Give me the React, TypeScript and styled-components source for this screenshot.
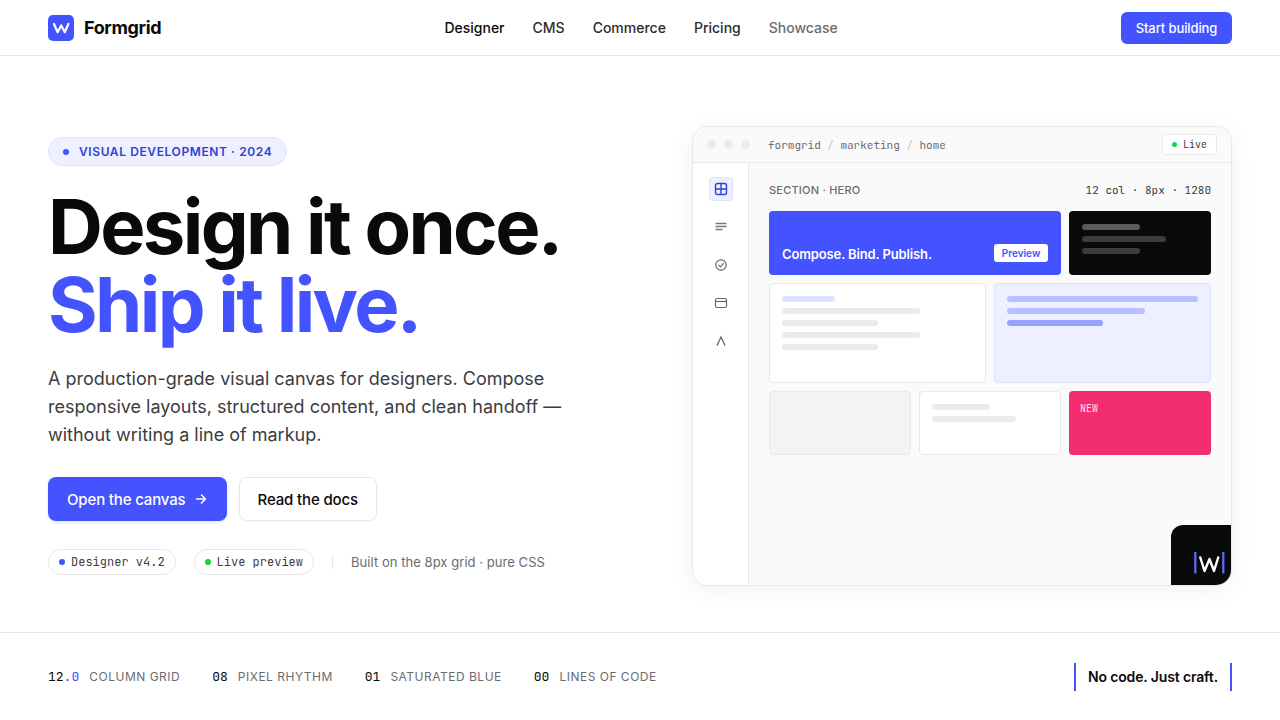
import styled, { createGlobalStyle } from 'styled-components'

const MONO = `"JetBrains Mono", "DejaVu Sans Mono", "Liberation Mono", monospace`

const GlobalStyle = createGlobalStyle`
  html, body {
    margin: 0;
    background: #fff;
    font-family: Inter, "Liberation Sans", sans-serif;
    color: #0a0a0a;
  }
  * { box-sizing: border-box; }
`

const App = () => {
  return (
    <>
      <GlobalStyle />
      <Page>
        <Header>
          <Brand>
            <LogoMark viewBox="0 0 26 26">
              <rect width="26" height="26" rx="5" fill="#4353ff" />
              <path d="M6 9 L9.600 17.200 L13.200 10.500 L16.800 17.200 L20.400 9" fill="none" stroke="#fff" strokeWidth="2.2" strokeLinejoin="round" strokeLinecap="round" />
            </LogoMark>
            <BrandName>Formgrid</BrandName>
          </Brand>
          <Nav>
            <NavLink $active>Designer</NavLink>
            <NavLink>CMS</NavLink>
            <NavLink>Commerce</NavLink>
            <NavLink>Pricing</NavLink>
            <NavLink $muted>Showcase</NavLink>
          </Nav>
          <StartButton>Start building</StartButton>
        </Header>

        <Hero>
          <HeroCopy>
            <Eyebrow>
              <Dot $color="#4353ff" $size={6} />
              VISUAL DEVELOPMENT · 2024
            </Eyebrow>
            <Headline>
              Design it once.
              <br />
              <Accent>Ship it live.</Accent>
            </Headline>
            <Lead>
              A production-grade visual canvas for designers. Compose responsive layouts, structured content, and clean handoff — without writing a line of markup.
            </Lead>
            <Actions>
              <PrimaryButton>
                Open the canvas
                <svg width="14" height="14" viewBox="0 0 14 14" fill="none" stroke="#fff" strokeWidth="1.5" strokeLinecap="round" strokeLinejoin="round">
                  <path d="M2.5 7h9M7.5 3l4 4-4 4" />
                </svg>
              </PrimaryButton>
              <GhostButton>Read the docs</GhostButton>
            </Actions>
            <MetaRow>
              <Tag>
                <Dot $color="#4353ff" $size={6} />
                Designer v4.2
              </Tag>
              <Tag>
                <Dot $color="#19d13a" $size={6} />
                Live preview
              </Tag>
              <MetaDivider />
              <MetaNote>Built on the 8px grid · pure CSS</MetaNote>
            </MetaRow>
          </HeroCopy>

          <Canvas>
            <TitleBar>
              <Lights>
                <Light />
                <Light />
                <Light />
              </Lights>
              <Crumbs>
                formgrid<CrumbSep>/</CrumbSep>marketing<CrumbSep>/</CrumbSep>home
              </Crumbs>
              <LivePill>
                <Dot $color="#19d13a" $size={5} />
                Live
              </LivePill>
            </TitleBar>
            <CanvasBody>
              <Sidebar>
                <SideIcon $active>
                  <svg width="14" height="14" viewBox="0 0 14 14" fill="none" stroke="#3140d8" strokeWidth="1.4">
                    <rect x="1.5" y="1.5" width="11" height="11" rx="2" />
                    <path d="M7 1.5v11M1.5 7h11" />
                  </svg>
                </SideIcon>
                <SideIcon>
                  <svg width="14" height="14" viewBox="0 0 14 14" fill="none" stroke="#77777c" strokeWidth="1.3">
                    <path d="M1.5 3.500h11M1.500 6.500h11M1.500 9.500h7" />
                  </svg>
                </SideIcon>
                <SideIcon>
                  <svg width="14" height="14" viewBox="0 0 14 14" fill="none" stroke="#66666b" strokeWidth="1.2" strokeLinecap="round" strokeLinejoin="round">
                    <circle cx="7" cy="7" r="5.2" />
                    <path d="M4.8 7.2l1.6 1.6 3-3.2" />
                  </svg>
                </SideIcon>
                <SideIcon>
                  <svg width="14" height="14" viewBox="0 0 14 14" fill="none" stroke="#66666b" strokeWidth="1.2">
                    <rect x="1.5" y="2.5" width="11" height="9" rx="1.5" />
                    <path d="M1.5 5.5h11" />
                  </svg>
                </SideIcon>
                <SideIcon>
                  <svg width="14" height="14" viewBox="0 0 14 14" fill="none" stroke="#66666b" strokeWidth="1.3">
                    <path d="M3 11.5L7 3l4 8.5" />
                  </svg>
                </SideIcon>
              </Sidebar>
              <Stage>
                <StageHead>
                  <StageLabel>SECTION · HERO</StageLabel>
                  <StageSpec>12 col · 8px · 1280</StageSpec>
                </StageHead>
                <BlockGrid>
                  <BlueBlock>
                    <BlueTitle>Compose. Bind. Publish.</BlueTitle>
                    <PreviewChip>Preview</PreviewChip>
                  </BlueBlock>
                  <DarkBlock>
                    <Bar $w={58} $bg="#5a5a5a" $h={6} />
                    <Bar $w={84} $bg="#3c3c3c" $h={6} />
                    <Bar $w={58} $bg="#3c3c3c" $h={6} />
                  </DarkBlock>
                  <WhiteBlock $span={3}>
                    <Bar $w={53} $bg="#dfe2ff" $h={6} />
                    <Bar $w={138} $bg="#ebebec" $h={6} />
                    <Bar $w={96} $bg="#ebebec" $h={6} />
                    <Bar $w={138} $bg="#ebebec" $h={6} />
                    <Bar $w={96} $bg="#ebebec" $h={6} />
                  </WhiteBlock>
                  <TintBlock>
                    <Bar $w={191} $bg="#b9c0ff" $h={6} />
                    <Bar $w={138} $bg="#b9c0ff" $h={6} />
                    <Bar $w={96} $bg="#96a0ff" $h={6} />
                  </TintBlock>
                  <GreyBlock />
                  <WhiteBlock $span={2}>
                    <Bar $w={58} $bg="#ebebec" $h={6} />
                    <Bar $w={84} $bg="#ebebec" $h={6} />
                  </WhiteBlock>
                  <PinkBlock>NEW</PinkBlock>
                </BlockGrid>
              </Stage>
            </CanvasBody>
            <CornerBadge>
              <svg width="32" height="22" viewBox="0 0 32 22" fill="none">
                <path d="M2.300 0v21.500M30.300 0v21.500" stroke="#5c6cff" strokeWidth="2.2" />
                <path d="M7 4.500L11.500 19L16.500 7L21 19L25.500 4.500" stroke="#fff" strokeWidth="2.4" strokeLinejoin="round" />
              </svg>
            </CornerBadge>
          </Canvas>
        </Hero>

        <Footer>
          <Stats>
            <Stat>
              <StatNum>12<StatDec>.0</StatDec></StatNum>
              <StatLabel>COLUMN GRID</StatLabel>
            </Stat>
            <Stat>
              <StatNum>08</StatNum>
              <StatLabel>PIXEL RHYTHM</StatLabel>
            </Stat>
            <Stat>
              <StatNum>01</StatNum>
              <StatLabel>SATURATED BLUE</StatLabel>
            </Stat>
            <Stat>
              <StatNum>00</StatNum>
              <StatLabel>LINES OF CODE</StatLabel>
            </Stat>
          </Stats>
          <Tagline>No code. Just craft.</Tagline>
        </Footer>
      </Page>
    </>
  )
}

export default App

const Page = styled.div`
  width: 1280px;
  height: 720px;
  display: flex;
  flex-direction: column;
  overflow: hidden;
  background: #fff;
`
const Header = styled.header`
  height: 56px;
  flex: none;
  padding: 0 48px;
  display: flex;
  align-items: center;
  justify-content: space-between;
  border-bottom: 1px solid #e8e8e9;
`
const Brand = styled.div`
  display: flex;
  align-items: center;
  gap: 10px;
`
const LogoMark = styled.svg`
  width: 26px;
  height: 26px;
  display: block;
`
const BrandName = styled.span`
  font-size: 18px;
  font-weight: 700;
  letter-spacing: -0.36px;
`
const Nav = styled.nav`
  display: flex;
  gap: 28px;
`
const NavLink = styled.a<{ $active?: boolean; $muted?: boolean }>`
  font-size: 14px;
  font-weight: 500;
  color: ${({ $active, $muted }) => ($active ? '#0a0a0a' : $muted ? '#6b6b70' : '#2c2c30')};
`
const StartButton = styled.button`
  height: 32px;
  width: 111px;
  padding: 0;
  border: 0;
  border-radius: 6px;
  background: #4353ff;
  color: #fff;
  font: 500 13px Inter, sans-serif;
  letter-spacing: -0.1px;
`
const Hero = styled.main`
  flex: 1;
  display: flex;
  align-items: flex-start;
  justify-content: space-between;
  padding: 70px 48px 0;
`
const HeroCopy = styled.div`
  width: 560px;
  padding-top: 11px;
  display: flex;
  flex-direction: column;
  align-items: flex-start;
`
const Eyebrow = styled.div`
  height: 29px;
  display: flex;
  align-items: center;
  gap: 10px;
  padding: 0 14px;
  border: 1px solid #dfe2ff;
  border-radius: 999px;
  background: #eef0ff;
  color: #3140d8;
  font-size: 12px;
  font-weight: 600;
  letter-spacing: 0.6px;
`
const Dot = styled.span<{ $color: string; $size: number }>`
  width: ${({ $size }) => $size}px;
  height: ${({ $size }) => $size}px;
  flex: none;
  border-radius: 50%;
  background: ${({ $color }) => $color};
`
const Headline = styled.h1`
  margin: 21px 0 0;
  font-size: 76px;
  line-height: 78px;
  font-weight: 700;
  letter-spacing: -2.66px;
  white-space: nowrap;
`
const Accent = styled.span`
  color: #4353ff;
`
const Lead = styled.p`
  margin: 22px 0 0;
  width: 528px;
  font-size: 18px;
  line-height: 28px;
  color: #3c3c40;
`
const Actions = styled.div`
  margin-top: 28px;
  display: flex;
  gap: 12px;
`
const PrimaryButton = styled.button`
  height: 44px;
  padding: 0 19px;
  display: flex;
  align-items: center;
  gap: 8px;
  border: 0;
  border-radius: 8px;
  background: #4353ff;
  color: #fff;
  font: 500 15px Inter, sans-serif;
  letter-spacing: -0.15px;
  box-shadow: 0 1px 3px rgba(67, 83, 255, 0.2);
`
const GhostButton = styled.button`
  height: 44px;
  padding: 0 18px;
  border: 1px solid #e8e8e9;
  border-radius: 8px;
  background: #fff;
  color: #0a0a0a;
  font: 500 15px Inter, sans-serif;
  letter-spacing: -0.15px;
  box-shadow: 0 1px 2px rgba(0, 0, 0, 0.04);
`
const MetaRow = styled.div`
  margin-top: 28px;
  display: flex;
  align-items: center;
  gap: 18px;
`
const Tag = styled.div`
  height: 26px;
  display: flex;
  align-items: center;
  gap: 6px;
  padding: 0 10px;
  border: 1px solid #e8e8e9;
  border-radius: 999px;
  font-family: ${MONO};
  font-size: 12px;
  color: #3c3c40;
`
const MetaDivider = styled.span`
  width: 1px;
  height: 14px;
  background: #e8e8e9;
`
const MetaNote = styled.span`
  font-size: 13px;
  letter-spacing: 0.05px;
  color: #6b6b70;
`
const Canvas = styled.section`
  position: relative;
  width: 540px;
  height: 460px;
  overflow: hidden;
  display: flex;
  flex-direction: column;
  border: 1px solid #e8e8e9;
  border-radius: 16px;
  background: #fafafa;
  box-shadow: 0 4px 24px rgba(0, 0, 0, 0.06);
`
const TitleBar = styled.div`
  height: 36px;
  flex: none;
  display: flex;
  align-items: center;
  padding: 0 14px;
  border-bottom: 1px solid #e8e8e9;
  background: #fafafa;
`
const Lights = styled.div`
  display: flex;
  gap: 8px;
`
const Light = styled.span`
  width: 9px;
  height: 9px;
  border-radius: 50%;
  background: #ebebec;
`
const Crumbs = styled.div`
  margin-left: 18px;
  flex: 1;
  font-family: ${MONO};
  font-size: 11px;
  color: #6b6b70;
`
const CrumbSep = styled.span`
  margin: 0 6.5px;
  color: #c8c8cb;
`
const LivePill = styled.div`
  height: 21px;
  display: flex;
  align-items: center;
  gap: 6px;
  padding: 0 9px;
  border: 1px solid #e8e8e9;
  border-radius: 4px;
  background: #fff;
  font-family: ${MONO};
  font-size: 10px;
  color: #3c3c40;
`
const CanvasBody = styled.div`
  flex: 1;
  display: flex;
  min-height: 0;
`
const Sidebar = styled.aside`
  width: 56px;
  flex: none;
  padding-top: 14px;
  display: flex;
  flex-direction: column;
  align-items: center;
  gap: 14px;
  background: #fff;
  border-right: 1px solid #e8e8e9;
`
const SideIcon = styled.div<{ $active?: boolean }>`
  width: 24px;
  height: 24px;
  display: flex;
  align-items: center;
  justify-content: center;
  border-radius: 4px;
  background: ${({ $active }) => ($active ? '#eef0ff' : 'transparent')};
  border: 1px solid ${({ $active }) => ($active ? '#dfe2ff' : 'transparent')};
`
const Stage = styled.div`
  flex: 1;
  padding: 20px;
`
const StageHead = styled.div`
  height: 14px;
  display: flex;
  align-items: center;
  justify-content: space-between;
  margin-bottom: 14px;
`
const StageLabel = styled.span`
  font-size: 11px;
  font-weight: 500;
  letter-spacing: 0.22px;
  color: #6b6b70;
`
const StageSpec = styled.span`
  font-family: ${MONO};
  font-size: 11px;
  color: #3c3c40;
`
const BlockGrid = styled.div`
  display: grid;
  grid-template-columns: repeat(6, 1fr);
  grid-template-rows: 64px 100px 64px;
  gap: 8px;
`
const Bar = styled.div<{ $w: number; $bg: string; $h: number }>`
  width: ${({ $w }) => $w}px;
  height: ${({ $h }) => $h}px;
  border-radius: 3px;
  background: ${({ $bg }) => $bg};
`
const BlueBlock = styled.div`
  grid-column: span 4;
  display: flex;
  align-items: flex-end;
  justify-content: space-between;
  padding: 0 13px 13px;
  border-radius: 4px;
  background: #4353ff;
`
const BlueTitle = styled.span`
  font-size: 13px;
  font-weight: 600;
  line-height: 16px;
  letter-spacing: -0.13px;
  color: #fff;
`
const PreviewChip = styled.span`
  height: 18px;
  width: 54px;
  display: flex;
  align-items: center;
  justify-content: center;
  border-radius: 3px;
  background: #fff;
  color: #4353ff;
  font-size: 10px;
  font-weight: 600;
`
const DarkBlock = styled.div`
  grid-column: span 2;
  display: flex;
  flex-direction: column;
  gap: 6px;
  padding: 13px;
  border-radius: 4px;
  background: #0a0a0a;
`
const WhiteBlock = styled.div<{ $span: number }>`
  grid-column: span ${({ $span }) => $span};
  display: flex;
  flex-direction: column;
  gap: 6px;
  padding: 12px;
  border: 1px solid #e8e8e9;
  border-radius: 4px;
  background: #fff;
`
const TintBlock = styled.div`
  grid-column: span 3;
  display: flex;
  flex-direction: column;
  gap: 6px;
  padding: 12px;
  border: 1px solid #dfe2ff;
  border-radius: 4px;
  background: #eef0ff;
`
const GreyBlock = styled.div`
  grid-column: span 2;
  border: 1px solid #e8e8e9;
  border-radius: 4px;
  background: #f3f3f3;
`
const PinkBlock = styled.div`
  grid-column: span 2;
  padding: 11px;
  border-radius: 4px;
  background: #f22e70;
  color: #ffdce8;
  font-family: ${MONO};
  font-size: 10px;
  line-height: 14px;
`
const CornerBadge = styled.div`
  position: absolute;
  right: 0;
  bottom: 0;
  width: 60px;
  height: 60px;
  display: flex;
  align-items: flex-end;
  justify-content: flex-end;
  padding: 0 6px 11px 0;
  background: #0a0a0a;
  border-top-left-radius: 12px;
`
const Footer = styled.footer`
  height: 88px;
  flex: none;
  padding: 0 48px;
  display: flex;
  align-items: center;
  justify-content: space-between;
  border-top: 1px solid #e8e8e9;
`
const Stats = styled.div`
  display: flex;
  gap: 32px;
`
const Stat = styled.div`
  display: flex;
  align-items: baseline;
  gap: 10px;
`
const StatNum = styled.span`
  font-family: ${MONO};
  font-size: 13px;
  color: #0a0a0a;
`
const StatDec = styled.span`
  color: #4353ff;
`
const StatLabel = styled.span`
  font-size: 12px;
  letter-spacing: 0.5px;
  color: #6b6b70;
`
const Tagline = styled.div`
  height: 28px;
  display: flex;
  align-items: center;
  padding: 0 12px;
  border-left: 2px solid #4353ff;
  border-right: 2px solid #4353ff;
  font-size: 14px;
  font-weight: 600;
  letter-spacing: -0.14px;
  color: #0a0a0a;
`
